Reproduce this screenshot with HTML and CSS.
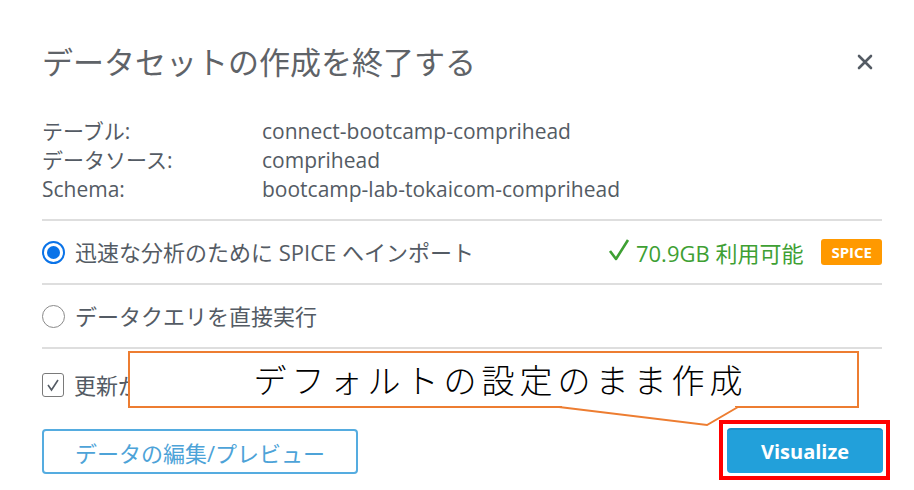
FILE: index.html
```html
<!DOCTYPE html>
<html lang="ja">

<head>
  <meta charset="UTF-8">
  <meta name="viewport" content="width=device-width, initial-scale=1.0">
  <title>データセットの作成を終了する</title>
  <link rel="stylesheet" href="styles.css">
</head>

<body>
  <main class="dialog">
    <header class="dialog-head">
      <h1>データセットの作成を終了する</h1>
      <button class="close" aria-label="閉じる">
        <svg width="16" height="16" viewBox="0 0 16 16">
          <path d="M2 2 L14 14 M14 2 L2 14" stroke="#545b64" stroke-width="2.6" stroke-linecap="round" fill="none"/>
        </svg>
      </button>
    </header>

    <dl class="source-info">
      <div class="info-row"><dt>テーブル:</dt><dd>connect-bootcamp-comprihead</dd></div>
      <div class="info-row"><dt>データソース:</dt><dd>comprihead</dd></div>
      <div class="info-row"><dt>Schema:</dt><dd>bootcamp-lab-tokaicom-comprihead</dd></div>
    </dl>

    <div class="option-row">
      <label class="option">
        <span class="radio checked"></span>
        迅速な分析のために SPICE へインポート
      </label>
      <div class="capacity">
        <svg class="tick" width="22" height="24" viewBox="0 0 22 24">
          <path d="M2 13 L8 21 L20 2" stroke="#3ea033" stroke-width="2.6" fill="none" stroke-linejoin="round"/>
        </svg>
        <span class="capacity-text">70.9GB 利用可能</span>
        <span class="badge">SPICE</span>
      </div>
    </div>

    <div class="option-row">
      <label class="option">
        <span class="radio"></span>
        データクエリを直接実行
      </label>
    </div>

    <div class="option-row check-row">
      <label class="option">
        <span class="checkbox">
          <svg width="14" height="14" viewBox="0 0 14 14">
            <path d="M2 7 L5.5 12 L12 2" stroke="#545b64" stroke-width="1.6" fill="none"/>
          </svg>
        </span>
        更新が失敗した場合
      </label>
    </div>

    <footer class="dialog-foot">
      <button class="btn btn-outline">データの編集/プレビュー</button>
      <span class="highlight">
        <button class="btn btn-primary">Visualize</button>
      </span>
    </footer>
  </main>

  <div class="callout">
    デフォルトの設定のまま作成
    <svg class="callout-tail" width="184" height="24" viewBox="0 0 184 24">
      <rect x="6" y="0" width="173" height="4" fill="#fff"/>
      <polygon points="4,3 151,21 181,3" fill="#fff"/>
      <polyline points="3,3 151,21 182,3" stroke="#ed7d31" stroke-width="2" fill="none"/>
    </svg>
  </div>
</body>

</html>
```

FILE: styles.css
```css
body {
  font-family: 'Open Sans', 'Noto Sans CJK JP', sans-serif;
  background-color: #fff;
  color: #545b64;
  margin: 0;
  padding: 0;
}

.dialog {
  padding: 40px 32px 0 42px;
}

.dialog-head {
  display: flex;
  align-items: center;
  justify-content: space-between;
  height: 44px;
}

.dialog-head h1 {
  margin: 0;
  font-size: 31px;
  font-weight: 400;
  line-height: 44px;
  color: #5f6368;
}

.close {
  background: none;
  border: none;
  padding: 0;
  margin-right: 9px;
  width: 16px;
  height: 16px;
  cursor: pointer;
}

.source-info {
  margin: 33px 0 0;
  padding-bottom: 15px;
}

.info-row {
  display: flex;
  font-size: 21px;
  line-height: 29px;
  height: 29px;
}

.info-row dt {
  width: 220px;
}

.info-row dd {
  margin: 0;
}

.option-row {
  display: flex;
  align-items: center;
  justify-content: space-between;
  border-top: 2px solid #dedede;
  height: 62px;
}

.option {
  display: flex;
  align-items: center;
  font-size: 22px;
  line-height: 30px;
  white-space: nowrap;
}

.radio {
  width: 23px;
  height: 23px;
  box-sizing: border-box;
  border: 1.5px solid #8a8a8a;
  border-radius: 50%;
  margin-right: 10px;
  position: relative;
}

.radio.checked {
  border: 2px solid #0a73e8;
}

.radio.checked::after {
  content: '';
  position: absolute;
  left: 3px;
  top: 3px;
  width: 13px;
  height: 13px;
  border-radius: 50%;
  background-color: #0a73e8;
}

.capacity {
  display: flex;
  align-items: center;
}

.tick {
  margin-right: 6px;
  margin-top: -4px;
}

.capacity-text {
  font-size: 22px;
  color: #3ea033;
  margin-right: 18px;
}

.badge {
  background-color: #ff9900;
  color: #fff;
  font-weight: 700;
  font-size: 15px;
  line-height: 26px;
  height: 26px;
  padding: 0 10px;
  border-radius: 3px;
}

.check-row {
  height: 64px;
  align-items: flex-start;
}

.check-row .option {
  margin-top: 21px;
}

.checkbox {
  width: 22px;
  height: 24px;
  box-sizing: border-box;
  border: 1.5px solid #7a7a7a;
  border-radius: 3px;
  margin-right: 10px;
  display: flex;
  align-items: center;
  justify-content: center;
}

.dialog-foot {
  display: flex;
  justify-content: space-between;
  align-items: flex-start;
  margin-top: 16px;
}

.btn {
  font-family: 'Open Sans', 'Noto Sans CJK JP', sans-serif;
  height: 45px;
  border-radius: 4px;
  cursor: pointer;
}

.btn-outline {
  width: 316px;
  background-color: #fff;
  border: 2px solid #55ace0;
  color: #4da3d8;
  font-size: 22px;
}

.highlight {
  display: flex;
  border: 4px solid #ff0000;
  padding: 4px 3px 3px 4px;
  margin: -9px -8px 0 0;
}

.btn-primary {
  width: 156px;
  background-color: #22a0da;
  border: none;
  border-top: 2px solid #1a8ec6;
  color: #fff;
  font-size: 20px;
  font-weight: 700;
}

.callout {
  position: absolute;
  left: 128px;
  top: 351px;
  width: 731px;
  height: 57px;
  box-sizing: border-box;
  border: 2px solid #ed7d31;
  background-color: #fff;
  color: #000;
  font-family: 'Noto Sans CJK JP', sans-serif;
  font-size: 33px;
  font-weight: 300;
  letter-spacing: 5px;
  line-height: 53px;
  text-align: center;
  padding-left: 14px;
}

.callout-tail {
  position: absolute;
  left: 426px;
  top: 51px;
}
```
